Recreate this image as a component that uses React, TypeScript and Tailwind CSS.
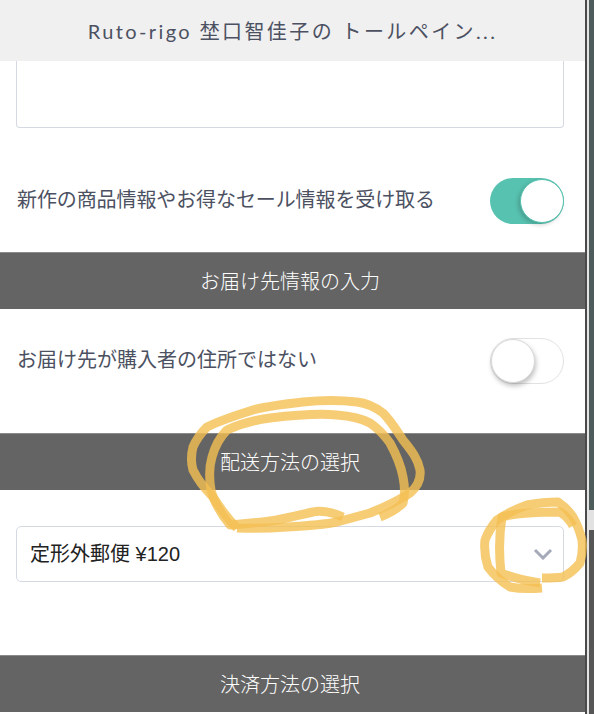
const font = "font-['Lato','Noto_Sans_CJK_JP',sans-serif]";

function SectionBar({ title }: { title: string }) {
  return (
    <div className="h-[57px] shrink-0 flex items-center justify-center pr-[5px] bg-[#646464] border-t border-[#8a8a8a] text-white text-[20px] font-light">
      {title}
    </div>
  );
}

function Toggle({ on }: { on: boolean }) {
  return (
    <div
      className={
        on
          ? "relative w-[74px] h-[46px] rounded-full bg-[#58c2b0]"
          : "relative w-[74px] h-[46px] rounded-full bg-white border border-[#e2e2e2]"
      }
    >
      <div
        className={
          on
            ? "absolute right-0 top-[1px] w-[44px] h-[44px] rounded-full bg-white border border-[#58c2b0] shadow-[-2px_2px_4px_rgba(0,0,0,0.18)]"
            : "absolute left-0 top-0 w-[44px] h-[44px] rounded-full bg-white border border-[#d8d8d8] shadow-[1px_3px_5px_rgba(0,0,0,0.25)]"
        }
      />
    </div>
  );
}

function Marks() {
  return (
    <svg className="absolute left-0 top-0 pointer-events-none" width="594" height="714" viewBox="0 0 594 714" fill="none">
      <g stroke="#f4bf52" strokeOpacity="0.8" strokeWidth="9" strokeLinecap="butt" strokeLinejoin="round">
        <path d="M343 517C332 512 320 510 313 512C298 515 285 519 270 521C255 523 242 524 230 525C222 515 214 503 211 490C209 478 209 467 212 457C215 446 220 437 227 430C240 424 255 420 270 418C295 415 318 413 337 415C350 416 361 418 370 423C379 429 385 436 390 443C396 454 401 466 403 477C405 487 405 496 403 503C396 510 388 514 380 517" />
        <path d="M237 528C262 529 275 528 287 527C305 526 322 525 337 522C348 519 359 516 370 513C385 507 398 501 410 493C418 486 421 478 420 470C418 458 410 449 403 440C397 431 391 421 383 413C375 407 366 403 357 402C340 400 322 400 303 402C285 404 268 406 253 410C237 415 221 420 207 427C201 433 196 440 193 447C191 455 191 463 193 470C198 480 205 489 213 497C220 508 228 519 237 528" />
        <path d="M542 588C530 589 520 589 510 587C502 582 494 575 488 567C485 558 484 549 485 540C488 532 492 526 497 520C506 514 516 509 527 505C538 503 548 502 558 502C564 506 569 511 573 517C577 524 580 532 582 540C583 548 582 556 580 563C575 569 569 574 563 577C556 578 549 578 542 578" />
        <path d="M540 583C525 581 511 577 501 573C499 555 499 535 502 517C515 513 540 512 560 512C566 516 570 520 573 526" />
      </g>
    </svg>
  );
}

export default function App() {
  return (
    <div className={`relative w-[594px] h-[714px] overflow-hidden bg-white flex ${font}`}>
      <div className="w-[585px] shrink-0 flex flex-col">
        <div className="h-[61px] shrink-0 flex items-center justify-center bg-[#f0f0f1] text-[#4c5162] text-[20px] tracking-[2.4px]">
          Ruto-rigo 埜口智佳子の トールペイン...
        </div>

        <div className="pl-4 pr-[21px]">
          <div className="h-[67px] bg-white border border-t-0 border-[#d5d9e2] rounded-b-[4px]" />
        </div>

        <div className="h-[124px] shrink-0 flex items-center justify-between pl-[17px] pr-[21px] pt-[22px] text-[#4c5162] text-[20px]">
          <span className="-mt-[4px] tracking-[-0.1px]">新作の商品情報やお得なセール情報を受け取る</span>
          <Toggle on />
        </div>

        <SectionBar title="お届け先情報の入力" />

        <div className="h-[124px] shrink-0 flex items-center justify-between pl-[17px] pr-[21px] pb-[20px] text-[#4c5162] text-[20px]">
          <span className="-mt-[4px]">お届け先が購入者の住所ではない</span>
          <Toggle on={false} />
        </div>

        <SectionBar title="配送方法の選択" />

        <div className="pt-[36px] pl-4 pr-[21px] h-[165px] shrink-0">
          <div className="h-[56px] flex items-center justify-between pl-[13px] pr-[10px] border border-[#d5d9e2] rounded-[5px] text-[#222222] text-[20px]">
            <span className="font-['Liberation_Sans','Noto_Sans_CJK_JP',sans-serif]">定形外郵便 ¥120</span>
            <svg width="20" height="12" viewBox="0 0 20 12" fill="none">
              <path d="M2 2L10 10L18 2" stroke="#a5a9b8" strokeWidth="3" />
            </svg>
          </div>
        </div>

        <SectionBar title="決済方法の選択" />
      </div>

      <div className="w-[2px] shrink-0 bg-[#4a4a4a]" />
      <div className="w-[2px] shrink-0 bg-[#e4e4e4]" />
      <div className="w-[5px] shrink-0 flex flex-col">
        <div className="h-[510px] bg-[#4e5c5b]" />
        <div className="h-[20px] bg-[#e2e2e2]" />
        <div className="flex-1 bg-[#565656]" />
      </div>

      <Marks />
    </div>
  );
}
